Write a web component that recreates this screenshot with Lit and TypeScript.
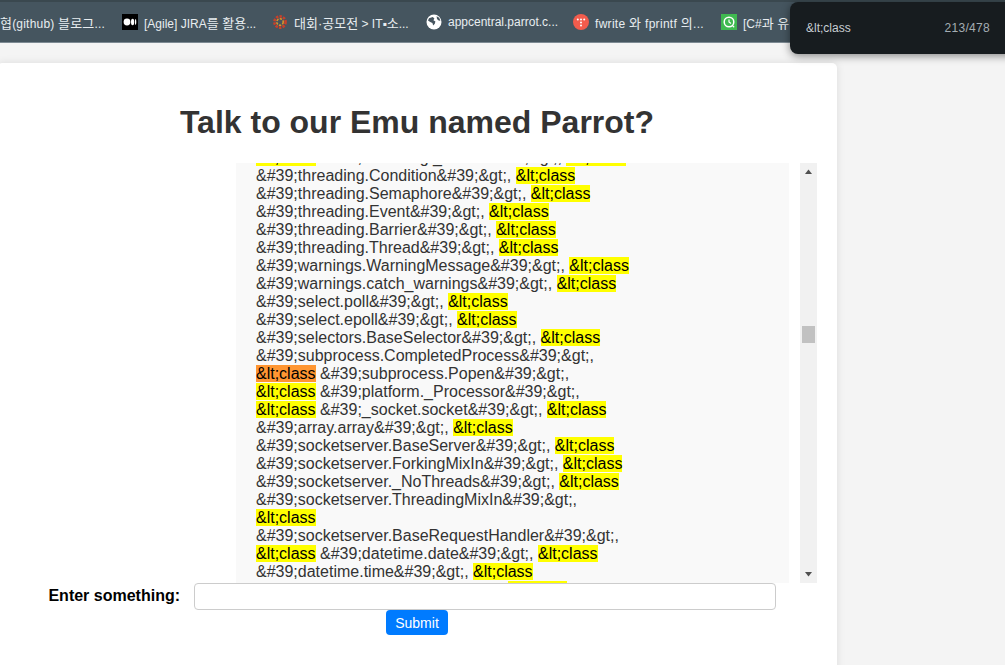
import { LitElement, html, css, svg } from "lit";
import { customElement } from "lit/decorators.js";

type Seg = string | { m: string; cur?: boolean };
const C: Seg = { m: "&lt;class" };
const Q = "&#39;";
const G = "&#39;&gt;,";

const ROWS: Seg[][] = [
  [C, ` ${Q}threading._RLock${G} `, C],
  [`${Q}threading.Condition${G} `, C],
  [`${Q}threading.Semaphore${G} `, C],
  [`${Q}threading.Event${G} `, C],
  [`${Q}threading.Barrier${G} `, C],
  [`${Q}threading.Thread${G} `, C],
  [`${Q}warnings.WarningMessage${G} `, C],
  [`${Q}warnings.catch_warnings${G} `, C],
  [`${Q}select.poll${G} `, C],
  [`${Q}select.epoll${G} `, C],
  [`${Q}selectors.BaseSelector${G} `, C],
  [`${Q}subprocess.CompletedProcess${G}`],
  [{ m: "&lt;class", cur: true }, ` ${Q}subprocess.Popen${G}`],
  [C, ` ${Q}platform._Processor${G}`],
  [C, ` ${Q}_socket.socket${G} `, C],
  [`${Q}array.array${G} `, C],
  [`${Q}socketserver.BaseServer${G} `, C],
  [`${Q}socketserver.ForkingMixIn${G} `, C],
  [`${Q}socketserver._NoThreads${G} `, C],
  [`${Q}socketserver.ThreadingMixIn${G}`],
  [C],
  [`${Q}socketserver.BaseRequestHandler${G}`],
  [C, ` ${Q}datetime.date${G} `, C],
  [`${Q}datetime.time${G} `, C],
  [`${Q}datetime.timezone${G} `, C],
];

const ICONS = {
  medium: svg`<rect width="16" height="16" fill="#000"/><circle cx="5" cy="8" r="3.4" fill="#fff"/><ellipse cx="10.6" cy="8" rx="1.6" ry="3.2" fill="#fff"/><ellipse cx="13.6" cy="8" rx=".7" ry="3" fill="#fff"/>`,
  contest: svg`<g fill="none" stroke-width="2.6" stroke-dasharray="2.4 1.2"><circle cx="8" cy="8" r="5.6" stroke="#c8402a"/><circle cx="8" cy="8" r="3.2" stroke="#d9962a" stroke-width="1.6"/></g>`,
  globe: svg`<circle cx="8" cy="8" r="7.5" fill="#fff"/><path d="M3 4.2 6.8 3l1.6 1.4-1 1.8 2 1.2-.6 2.4-1.6 1.6-.8-2.4-2.2-1L2 6.4zM10.6 2.2l2.6 1.6 1.2 3-1.8-.2-1.6-1.6z" fill="#46555f"/>`,
  tistory: svg`<circle cx="8" cy="8" r="8" fill="#f25c4d"/><g fill="#fff"><circle cx="4.8" cy="5.6" r="1"/><circle cx="8" cy="5.6" r="1"/><circle cx="11.2" cy="5.6" r="1"/><circle cx="8" cy="8.6" r="1"/><circle cx="8" cy="11.4" r="1"/></g>`,
  green: svg`<rect width="16" height="16" fill="#3fb950"/><circle cx="8" cy="8" r="4.8" fill="none" stroke="#fff" stroke-width="1.5"/><path d="M8 5.4V8l2 1.4M11.2 11.4l2 1.8" fill="none" stroke="#fff" stroke-width="1.2"/>`,
};

@customElement("app-root")
export class AppRoot extends LitElement {
  static styles = css`
    :host {
      display: block;
      width: 1005px;
      height: 665px;
      overflow: hidden;
      background: #f4f4f4;
      font-family: "Liberation Sans", Arial, sans-serif;
      position: relative;
    }
    .bar {
      height: 43px;
      box-sizing: border-box;
      background: #45555f;
      border-top: 2px solid #3a484f;
      border-bottom: 1px solid #7d8a93;
      display: flex;
      align-items: center;
      overflow: hidden;
      white-space: nowrap;
      color: #e8edf0;
      font-size: 12px;
      font-family: "Liberation Sans", "Noto Sans CJK KR", sans-serif;
    }
    .bm { display: flex; align-items: center; flex: none; gap: 6px; }
    .bm svg { width: 16px; height: 16px; flex: none; }
    .k { font-size: 13px; }
    .bm1 { width: 122px; letter-spacing: 0.2px; }
    .bm2 { width: 150px; }
    .bm3 { width: 154px; }
    .bm4 { width: 147px; }
    .bm5 { width: 148px; letter-spacing: 0.3px; }
    .bm6 { width: 120px; }
    .card {
      width: 840px;
      margin: 20px 0 0 -3px;
      height: 620px;
      background: #fff;
      border-radius: 5px;
      box-shadow: 0 0 8px rgba(0, 0, 0, 0.1);
      box-sizing: border-box;
      padding-top: 41px;
    }
    h1 {
      margin: 0;
      font-size: 32px;
      line-height: 37px;
      font-weight: 700;
      color: #333;
      text-align: center;
    }
    .output {
      display: flex;
      height: 420px;
      margin: 22px 0 0 239px;
    }
    .text {
      width: 553px;
      background: #f9f9f9;
      overflow: hidden;
      box-sizing: border-box;
      padding-left: 20px;
      font-size: 16px;
      line-height: 18px;
      color: #333;
    }
    .inner { margin-top: -14px; }
    .row { white-space: pre; height: 18px; }
    mark { background: #ffff00; color: #000; }
    mark.cur { background: #ff9632; color: #000; }
    .sb {
      width: 17px;
      margin-left: 11px;
      background: #f1f1f1;
      display: flex;
      flex-direction: column;
    }
    .arrow { width: 17px; height: 17px; flex: none; display: block; }
    .track { flex: 1; position: relative; }
    .thumb {
      position: absolute;
      left: 2px;
      top: 146px;
      width: 13px;
      height: 17px;
      background: #c1c1c1;
    }
    form {
      display: grid;
      grid-template-columns: 197px 582px;
      align-items: center;
    }
    label {
      font-size: 16px;
      font-weight: 700;
      color: #000;
      text-align: right;
      padding: 0 14px 2px 0;
      white-space: nowrap;
    }
    input {
      width: 582px;
      height: 27px;
      box-sizing: border-box;
      border: 1px solid #ccc;
      border-radius: 4px;
      background: #fff;
      outline: none;
      padding: 0;
    }
    .actions { display: flex; justify-content: center; }
    button {
      width: 62px;
      height: 25px;
      background: #007bff;
      color: #fff;
      border: none;
      border-radius: 4px;
      font: 14px "Liberation Sans", Arial, sans-serif;
      padding: 0;
    }
    .find {
      position: absolute;
      left: 790px;
      top: 2px;
      width: 230px;
      height: 52px;
      box-sizing: border-box;
      background: #171c1f;
      border-radius: 8px;
      box-shadow: 0 2px 8px rgba(0, 0, 0, 0.45);
      color: #c7ced3;
      font-size: 12px;
      display: flex;
      align-items: center;
      padding: 0 30px 0 16px;
    }
    .find span:first-child { flex: 1; }
    .find span:last-child { color: #a4adb3; letter-spacing: 0.3px; }
  `;

  private bm(cls: string, icon: unknown, label: unknown) {
    return html`<div class="bm ${cls}">
      ${icon ? html`<svg viewBox="0 0 16 16">${icon}</svg>` : ""}<span>${label}</span>
    </div>`;
  }

  render() {
    return html`
      <div class="bar">
        ${this.bm("bm1", null, html`<span class="k">협</span>(github) <span class="k">블로그</span>...`)}
        ${this.bm("bm2", ICONS.medium, html`[Agile] JIRA<span class="k">를 활용</span>...`)}
        ${this.bm("bm3", ICONS.contest, html`<span class="k">대회·공모전</span> &gt; IT▪<span class="k">소</span>...`)}
        ${this.bm("bm4", ICONS.globe, "appcentral.parrot.c...")}
        ${this.bm("bm5", ICONS.tistory, html`fwrite <span class="k">와</span> fprintf <span class="k">의</span>...`)}
        ${this.bm("bm6", ICONS.green, html`[C#<span class="k">과 유니티로 만드</span>`)}
      </div>
      <div class="card">
        <h1>Talk to our Emu named Parrot?</h1>
        <div class="output">
          <div class="text">
            <div class="inner">
              ${ROWS.map(
                (r) => html`<div class="row">${r.map((s) =>
                  typeof s === "string"
                    ? s
                    : html`<mark class=${s.cur ? "cur" : ""}>${s.m}</mark>`
                )}</div>`
              )}
            </div>
          </div>
          <div class="sb">
            <svg class="arrow" viewBox="0 0 17 17"><path d="M8.5 6.5 12 11H5z" fill="#505050"/></svg>
            <div class="track"><div class="thumb"></div></div>
            <svg class="arrow" viewBox="0 0 17 17"><path d="M5 6h7l-3.5 4.5z" fill="#505050"/></svg>
          </div>
        </div>
        <form>
          <label>Enter something:</label>
          <input type="text" />
        </form>
        <div class="actions"><button type="button">Submit</button></div>
      </div>
      <div class="find"><span>&amp;lt;class</span><span>213/478</span></div>
    `;
  }
}
